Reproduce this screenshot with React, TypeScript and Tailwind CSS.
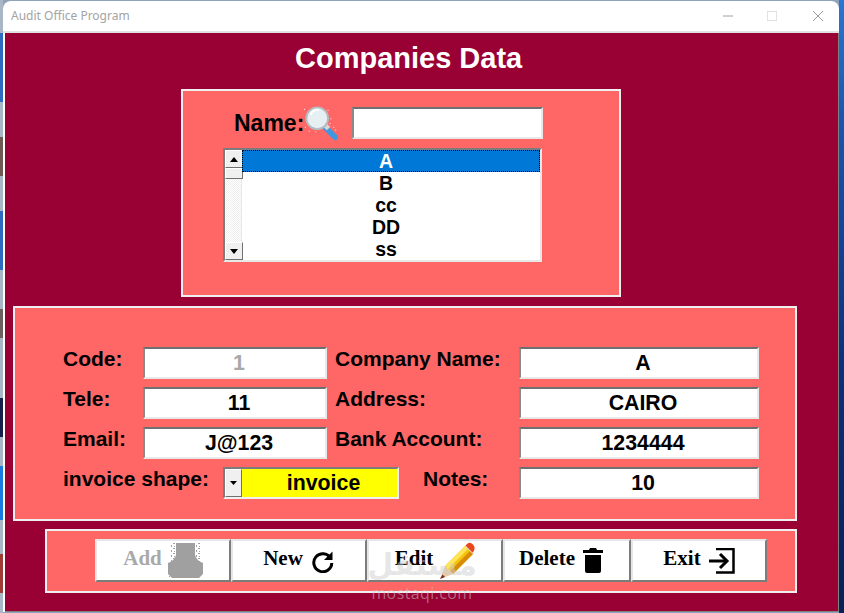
import type { ReactNode } from 'react';

const desktopLeft: [number, string][] = [
  [34, '#a9b6c6'], [70, '#2f6cc0'], [35, '#a9b6c6'], [40, '#6e5a50'], [35, '#a9b6c6'], [60, '#2f6cc0'], [40, '#a9b6c6'],
  [30, '#6e6060'], [60, '#a9b6c6'], [40, '#16204a'], [30, '#a9b6c6'], [55, '#1b7ce0'], [34, '#a9b6c6'], [40, '#a03c34'], [20, '#a9b6c6'],
];

function Field({ children, className = 'w-[184px]', muted = false }: { children: ReactNode; className?: string; muted?: boolean }) {
  return (
    <div className={`${className} h-8 shrink-0 bg-white border-2 border-t-[#6f6f6f] border-l-[#8a8a8a] border-r-[#e8e8e8] border-b-[#e8e8e8] flex items-center justify-center pl-2 pt-0.5 text-[21.33px] font-bold ${muted ? 'text-[#a8a8a8]' : 'text-black'}`}>
      {children}
    </div>
  );
}

function Label({ children, className }: { children: ReactNode; className: string }) {
  return <div className={`${className} shrink-0 h-8 -mt-1 flex items-center text-[21px] font-bold text-black whitespace-nowrap`}>{children}</div>;
}

function ArrowButton({ dir }: { dir: 'up' | 'down' }) {
  return (
    <div className="w-[18px] h-[18px] shrink-0 bg-[#f0f0f0] border border-t-white border-l-white border-r-[#707070] border-b-[#707070] flex items-center justify-center">
      <svg width="8" height="5" viewBox="0 0 8 5">
        {dir === 'up' ? <path d="M4 0 8 5H0z" fill="#000" /> : <path d="M0 0h8L4 5z" fill="#000" />}
      </svg>
    </div>
  );
}

function ActionButton({ label, className, muted = false, children }: { label: string; className: string; muted?: boolean; children: ReactNode }) {
  return (
    <div className={`${className} h-[43px] shrink-0 bg-white border-2 border-t-[#e6e6e6] border-l-[#e6e6e6] border-r-[#7c7c7c] border-b-[#7c7c7c] flex items-center justify-center font-bold text-[21px] ${muted ? 'text-[#a9a9a9]' : 'text-black'} [font-family:'Liberation_Serif',serif]`}>
      <span className="-mt-1">{label}</span>
      {children}
    </div>
  );
}

function SearchGlass() {
  return (
    <svg width="34" height="34" viewBox="0 0 36 36" className="shrink-0">
      <path d="M22 22 33 33" stroke="#3f98de" strokeWidth="6" strokeLinecap="round" />
      <path d="M23 21 26 24" stroke="#d8d8d8" strokeWidth="5" />
      <circle cx="14" cy="13" r="11.500" fill="#e6eff2" stroke="#b4bcc0" strokeWidth="2" />
      <path d="M7 9a9 9 0 0 1 9-5" stroke="#fff" strokeWidth="2" fill="none" />
      <g fill="#fff">
        <rect x="0" y="3" width="1" height="1" /><rect x="1" y="22" width="1" height="1" /><rect x="5" y="26" width="1" height="1" />
        <rect x="12" y="27" width="1" height="1" /><rect x="27" y="18" width="1" height="1" /><rect x="31" y="22" width="1" height="1" />
        <rect x="33" y="25" width="1" height="1" /><rect x="25" y="4" width="1" height="1" /><rect x="28" y="13" width="1" height="1" />
      </g>
    </svg>
  );
}

export default function App() {
  return (
    <div className="relative w-[844px] h-[613px] overflow-hidden flex bg-[#8fa3bb] [font-family:'Liberation_Sans',Arial,sans-serif]">
      {/* desktop behind the window */}
      <div className="w-[3px] shrink-0 flex flex-col">
        {desktopLeft.map(([h, c], i) => (
          <div key={i} style={{ height: h, background: c }} />
        ))}
      </div>

      <div className="w-[836px] shrink-0 mt-px h-[611px] flex flex-col bg-white rounded-t-lg overflow-hidden">
        {/* Title bar */}
        <div className="h-[30px] shrink-0 flex items-center pl-2 text-[12px] text-[#a3a3a3] [font-family:'Noto_Sans',sans-serif]">
          <span className="flex-1">Audit Office Program</span>
          <svg width="12" height="12" viewBox="0 0 12 12" className="mr-[33px]"><path d="M1 6h10" stroke="#a0a0a0" /></svg>
          <div className="w-[10px] h-[10px] mr-[35px] border border-[#e2e2e2]" />
          <svg width="12" height="12" viewBox="0 0 12 12" className="mr-[15px]"><path d="M1 1l10 10M11 1 1 11" stroke="#9a9a9a" /></svg>
        </div>
        <div className="h-0.5 shrink-0 bg-[#e2e2e2]" />

        <div className="flex-1 ml-0.5 bg-[#990033] border-r border-b border-[#808080]">
          <h1 className="h-[50px] mb-1.5 pt-0.5 pl-[290px] flex items-center text-[29px] font-bold text-white">Companies Data</h1>

          {/* Search panel */}
          <section className="ml-[176px] w-[440px] h-[208px] bg-[#ff6666] border-2 border-[#f0f0f0] pt-4 pl-10">
            <div className="flex items-center h-8 pl-[11px]">
              <span className="text-[23px] font-bold text-black w-[70px] shrink-0">Name:</span>
              <SearchGlass />
              <div className="ml-[14px] w-[191px] h-8 shrink-0 bg-white border-2 border-t-[#6f6f6f] border-l-[#8a8a8a] border-r-[#e8e8e8] border-b-[#e8e8e8]" />
            </div>
            <div className="mt-[9px] w-[319px] h-[114px] flex bg-white border-2 border-t-[#7c7c7c] border-l-[#7c7c7c] border-r-[#e8e8e8] border-b-[#e8e8e8]">
              <div className="w-[17px] shrink-0 flex flex-col bg-[repeating-conic-gradient(#eeeeee_0_25%,#ffffff_0_50%)] bg-[length:2px_2px] border-r border-[#e8e8e8]">
                <ArrowButton dir="up" />
                <div className="w-[18px] h-[11px] bg-[#f0f0f0] border border-t-white border-l-white border-r-[#707070] border-b-[#707070]" />
                <div className="flex-1" />
                <ArrowButton dir="down" />
              </div>
              <ul className="flex-1 text-[19.5px] font-bold text-black text-center pr-[10px]">
                <li className="h-[22px] -mr-[10px] pr-[10px] leading-[20px] bg-[#0078d7] text-white border border-dotted border-black">A</li>
                <li className="h-[22px] leading-[22px]">B</li>
                <li className="h-[22px] leading-[22px]">cc</li>
                <li className="h-[22px] leading-[22px]">DD</li>
                <li className="h-[22px] leading-[22px]">ss</li>
              </ul>
            </div>
          </section>

          {/* Details panel */}
          <section className="mt-[9px] ml-2 w-[784px] h-[215px] bg-[#ff6666] border-2 border-[#f0f0f0] pt-[39px] pl-12 flex flex-col gap-2">
            <div className="flex">
              <Label className="w-20">Code:</Label>
              <Field muted>1</Field>
              <Label className="w-[184px] ml-2">Company Name:</Label>
              <Field className="w-[240px]">A</Field>
            </div>
            <div className="flex">
              <Label className="w-20">Tele:</Label>
              <Field>11</Field>
              <Label className="w-[184px] ml-2">Address:</Label>
              <Field className="w-[240px]">CAIRO</Field>
            </div>
            <div className="flex">
              <Label className="w-20">Email:</Label>
              <Field>J@123</Field>
              <Label className="w-[184px] ml-2">Bank Account:</Label>
              <Field className="w-[240px]">1234444</Field>
            </div>
            <div className="flex">
              <Label className="w-40">invoice shape:</Label>
              <div className="w-[176px] h-8 shrink-0 flex bg-[#ffff00] border-2 border-t-[#7c7c7c] border-l-[#7c7c7c] border-r-[#f0f0f0] border-b-[#f0f0f0]">
                <div className="w-[17px] shrink-0 bg-[#f0f0f0] border border-t-white border-l-white border-r-[#707070] border-b-[#707070] flex items-center justify-center">
                  <svg width="7" height="4" viewBox="0 0 7 4"><path d="M0 0h7L3.500 4z" fill="#000" /></svg>
                </div>
                <span className="flex-1 flex items-center justify-center pl-2 pt-0.5 text-[21.33px] font-bold text-black">invoice</span>
              </div>
              <Label className="w-24 ml-6">Notes:</Label>
              <Field className="w-[240px]">10</Field>
            </div>
          </section>

          {/* Actions panel */}
          <section className="mt-2 ml-10 w-[752px] h-16 bg-[#ff6666] border-2 border-[#f0f0f0] pt-2 pl-12 flex">
            <ActionButton label="Add" className="w-[136px] gap-1.5" muted>
              <svg width="35" height="35" viewBox="0 0 35 35">
                <defs>
                  <pattern id="dither" width="5" height="5" patternUnits="userSpaceOnUse">
                    <rect width="2" height="1" fill="#a0a0a0" />
                    <rect x="3" y="2" width="1" height="2" fill="#a0a0a0" />
                    <rect x="1" y="3" width="1" height="1" fill="#a0a0a0" />
                  </pattern>
                </defs>
                <path d="M3 0h29v35H0V20h3z" fill="url(#dither)" />
                <path d="M8 0h19v12q1 5 8 8v11l-4 4H4l-4-4V20q7-3 8-8z" fill="#a0a0a0" />
              </svg>
            </ActionButton>
            <ActionButton label="New" className="w-[136px] gap-2">
              <svg width="24" height="24" viewBox="0 0 24 24" fill="none">
                <path d="M19.500 9A9 9 0 1 0 20.800 14" stroke="#000" strokeWidth="3" />
                <path d="M21.500 2.500V11H13z" fill="#000" />
              </svg>
            </ActionButton>
            <ActionButton label="Edit" className="w-[136px] gap-1">
              <svg width="38" height="38" viewBox="0 0 38 38">
                <path d="M8 24 28 4l8 8-20 20z" fill="#f6c40c" />
                <path d="M8 24 28 4l3 3L11 27z" fill="#ffe35a" />
                <path d="M13 29 33 9l3 3-20 20z" fill="#d98a06" />
                <path d="M8 24l8 8-13 5z" fill="#edc9a0" />
                <path d="M5.500 32.500 3 37l5-2z" fill="#7a2a20" />
                <path d="M28 4l8 8 1-1-8-8z" fill="#d8d8d8" />
                <path d="M30 2q3-2.500 6 .500t.500 7l-1 1-7-7z" fill="#e8481c" />
              </svg>
            </ActionButton>
            <ActionButton label="Delete" className="w-[128px] gap-2 pr-3">
              <svg width="20" height="25" viewBox="0 0 20 25">
                <path d="M7 0h6l1 2h6v3H0V2h6z" fill="#000" />
                <path d="M2 7h16v16q0 2-2 2H4q-2 0-2-2z" fill="#000" />
              </svg>
            </ActionButton>
            <ActionButton label="Exit" className="w-[136px] gap-2">
              <svg width="26" height="26" viewBox="0 0 26 26" fill="none">
                <path d="M7 1h17.500v23.500H7" stroke="#000" strokeWidth="2.500" />
                <path d="M0 13h17" stroke="#000" strokeWidth="3" />
                <path d="M11 6l7 7-7 7" stroke="#000" strokeWidth="3" />
              </svg>
            </ActionButton>
          </section>
        </div>
      </div>

      <div className="w-[5px] shrink-0 bg-[linear-gradient(#2a76d0_0%,#1a55b0_20%,#0e2f7a_60%,#0a1f55_100%)]" />

      {/* Site watermark over the screenshot */}
      <div className="absolute left-[366px] top-[545px] w-[112px] flex flex-col items-center text-[#d0d0d0]/50 pointer-events-none">
        <span className="text-[30px] font-bold leading-[40px] [font-family:'DejaVu_Sans',sans-serif]">مستقل</span>
        <span className="text-[16px] leading-[16px] tracking-[0.4px] [font-family:'Open_Sans',sans-serif]">mostaqi.com</span>
      </div>
    </div>
  );
}
